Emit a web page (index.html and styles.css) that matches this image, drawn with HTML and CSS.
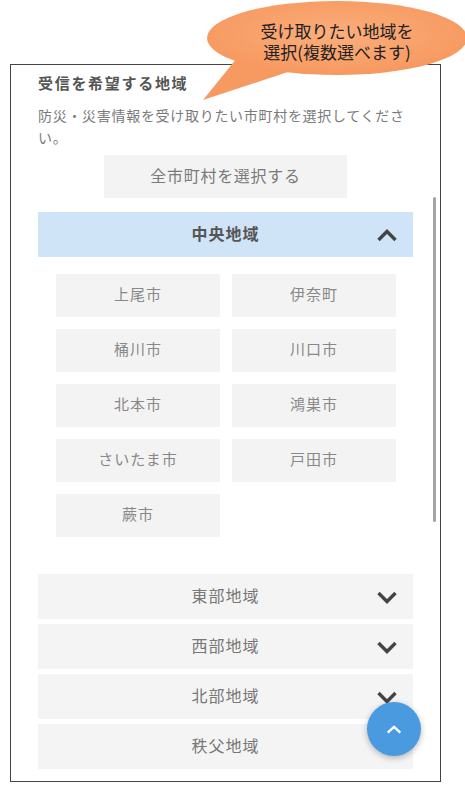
FILE: index.html
```html
<!DOCTYPE html>
<html lang="ja">
<head>
<meta charset="utf-8">
<title>受信を希望する地域</title>
<link rel="stylesheet" href="styles.css">
</head>
<body>
<div class="frame">
  <h2 class="title">受信を希望する地域</h2>
  <p class="desc">防災・災害情報を受け取りたい市町村を選択してください。</p>
  <button class="all-btn">全市町村を選択する</button>

  <section class="acc open">
    <div class="acc-head">
      <span class="acc-label">中央地域</span>
      <svg class="chev" viewBox="0 0 22 14" width="22" height="14"><path d="M2.5 12 L11 3.5 L19.5 12" /></svg>
    </div>
    <div class="grid">
      <button class="city">上尾市</button>
      <button class="city">伊奈町</button>
      <button class="city">桶川市</button>
      <button class="city">川口市</button>
      <button class="city">北本市</button>
      <button class="city">鴻巣市</button>
      <button class="city">さいたま市</button>
      <button class="city">戸田市</button>
      <button class="city">蕨市</button>
    </div>
  </section>

  <div class="acc-list">
    <div class="acc-head closed">
      <span class="acc-label">東部地域</span>
      <svg class="chev" viewBox="0 0 22 14" width="22" height="14"><path d="M2.5 3 L11 11.5 L19.5 3" /></svg>
    </div>
    <div class="acc-head closed">
      <span class="acc-label">西部地域</span>
      <svg class="chev" viewBox="0 0 22 14" width="22" height="14"><path d="M2.5 3 L11 11.5 L19.5 3" /></svg>
    </div>
    <div class="acc-head closed">
      <span class="acc-label">北部地域</span>
      <svg class="chev" viewBox="0 0 22 14" width="22" height="14"><path d="M2.5 3 L11 11.5 L19.5 3" /></svg>
    </div>
    <div class="acc-head closed">
      <span class="acc-label">秩父地域</span>
      <svg class="chev" viewBox="0 0 22 14" width="22" height="14"><path d="M2.5 3 L11 11.5 L19.5 3" /></svg>
    </div>
  </div>

  <div class="scrollbar"></div>
</div>

<button class="fab" aria-label="ページトップへ">
  <svg viewBox="0 0 20 12" width="18" height="11"><path d="M3 9.5 L10 3 L17 9.5" /></svg>
</button>

<div class="callout">
  <svg class="callout-shape" viewBox="0 0 270 105" width="270" height="105">
    <defs>
      <radialGradient id="og" cx="50%" cy="45%" r="60%">
        <stop offset="0%" stop-color="#fbae7c"/>
        <stop offset="100%" stop-color="#f6975d"/>
      </radialGradient>
    </defs>
    <polygon points="8,100 42,58 105,68" fill="#f79a62"/>
    <ellipse cx="142" cy="38" rx="130" ry="37" fill="url(#og)"/>
  </svg>
  <div class="callout-text">
    <span class="callout-line">受け取りたい地域を</span>
    <span class="callout-line">選択(複数選べます)</span>
  </div>
</div>
</body>
</html>
```

FILE: styles.css
```css
* { box-sizing: border-box; }

html, body {
  margin: 0;
  padding: 0;
  background: #fff;
}

body {
  font-family: "Noto Sans CJK JP", "Noto Sans", sans-serif;
  color: #555;
  width: 465px;
  height: 800px;
  position: relative;
  overflow: hidden;
  padding-top: 64px;
}

.frame {
  position: relative;
  margin-left: 10px;
  width: 431px;
  height: 718px;
  border: 1px solid #444;
  padding: 7px 27px 0 27px;
  overflow: hidden;
}

.title {
  margin: 0;
  font-size: 15px;
  line-height: 22px;
  font-weight: 700;
  letter-spacing: 1.7px;
  color: #555;
}

.desc {
  margin: 10px 0 0 0;
  font-size: 14px;
  line-height: 22px;
  letter-spacing: 0.7px;
  color: #7a7a7a;
}

.all-btn {
  display: block;
  margin: 7px auto 0;
  width: 243px;
  height: 43px;
  border: 0;
  background: #f3f3f3;
  color: #7a7a7a;
  font-family: inherit;
  font-size: 16px;
  letter-spacing: 0.7px;
  padding: 0 0 4px 0;
}

.acc { margin-top: 14px; }

.acc-head {
  display: grid;
  grid-template-columns: 1fr auto 1fr;
  align-items: center;
  height: 45px;
  padding: 0 15px 0 15px;
  background: #f4f4f4;
  font-size: 16px;
  letter-spacing: 1px;
  color: #777;
}

.acc-label {
  grid-column: 2;
  padding-bottom: 4px;
}

.acc.open .acc-head {
  background: #cfe4f7;
  font-weight: 700;
  color: #555;
}

.chev {
  grid-column: 3;
  justify-self: end;
  fill: none;
  stroke: #444;
  stroke-width: 3.4;
  stroke-linecap: butt;
  stroke-linejoin: miter;
}

.grid {
  display: grid;
  grid-template-columns: 164px 164px;
  grid-auto-rows: 43px;
  gap: 12px;
  padding: 17px 17px 0 18px;
}

.city {
  border: 0;
  background: #f3f3f3;
  color: #888;
  font-family: inherit;
  font-size: 15px;
  letter-spacing: 1px;
  padding: 0 0 4px 0;
}

.acc-list {
  margin-top: 37px;
  display: flex;
  flex-direction: column;
  gap: 5px;
}

.scrollbar {
  position: absolute;
  left: 422px;
  top: 132px;
  width: 3px;
  height: 325px;
  border-radius: 2px;
  background: #a3a3a3;
}

.fab {
  position: absolute;
  left: 367px;
  top: 702px;
  width: 54px;
  height: 54px;
  border-radius: 50%;
  border: 0;
  padding: 0;
  background: #4a9ae0;
  box-shadow: 0 2px 6px rgba(0, 0, 0, 0.28);
  display: flex;
  align-items: center;
  justify-content: center;
}

.fab svg {
  fill: none;
  stroke: #fff;
  stroke-width: 2.6;
}

.callout {
  position: absolute;
  left: 195px;
  top: 0;
  width: 270px;
  height: 105px;
}

.callout-shape {
  display: block;
}

.callout-text {
  position: absolute;
  left: 12px;
  top: 20px;
  width: 260px;
  display: flex;
  flex-direction: column;
  align-items: center;
  font-size: 17px;
  color: #222;
}

.callout-line {
  display: block;
  height: 21px;
  line-height: 21px;
}
```
